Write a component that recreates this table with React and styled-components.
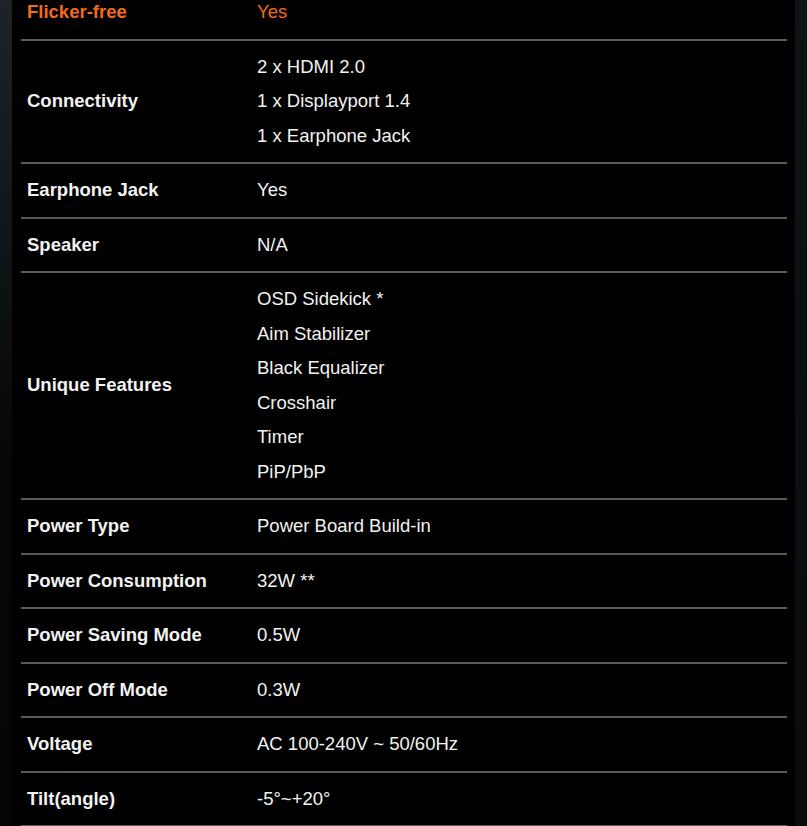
import React from 'react';
import styled, { createGlobalStyle } from 'styled-components';

const GlobalStyle = createGlobalStyle`
  html, body {
    margin: 0;
    padding: 0;
    background: #000;
    overflow: hidden;
  }
  body {
    font-family: 'Liberation Sans', Arial, sans-serif;
  }
`;

const specs = [
  { label: 'Flicker-free', values: ['Yes'], highlight: true },
  { label: 'Connectivity', values: ['2 x HDMI 2.0', '1 x Displayport 1.4', '1 x Earphone Jack'] },
  { label: 'Earphone Jack', values: ['Yes'] },
  { label: 'Speaker', values: ['N/A'] },
  {
    label: 'Unique Features',
    values: ['OSD Sidekick *', 'Aim Stabilizer', 'Black Equalizer', 'Crosshair', 'Timer', 'PiP/PbP']
  },
  { label: 'Power Type', values: ['Power Board Build-in'] },
  { label: 'Power Consumption', values: ['32W **'] },
  { label: 'Power Saving Mode', values: ['0.5W'] },
  { label: 'Power Off Mode', values: ['0.3W'] },
  { label: 'Voltage', values: ['AC 100-240V ~ 50/60Hz'] },
  { label: 'Tilt(angle)', values: ['-5°~+20°'] }
];

const Page = styled.div`
  display: flex;
  height: 826px;
  overflow: hidden;
`;

const SideStrip = styled.div`
  flex: 0 0 12px;
  background: ${(props) =>
    props.side === 'left'
      ? 'linear-gradient(180deg, #1d2427 0%, #101416 30%, #060707 55%, #050505 100%)'
      : 'linear-gradient(180deg, #0d1416 0%, #0b1012 40%, #0a0b0c 100%)'};
`;

const Main = styled.div`
  flex: 1;
  background: #000;
  padding: 0 8px 0 9px;
`;

const Table = styled.div`
  margin-top: -14px;
  display: flex;
  flex-direction: column;
`;

const Row = styled.div`
  display: grid;
  grid-template-columns: 230px 1fr;
  align-items: center;
  padding: 9px 0;
  border-bottom: 2px solid #5a5a5a;
  color: ${(props) => (props.highlight ? '#f26b1d' : '#f2f2f2')};
  font-size: 18.5px;
  line-height: 34.5px;
`;

const Label = styled.div`
  padding: 0 6px;
  font-weight: 700;
`;

const Values = styled.div`
  padding: 0 6px;
  display: flex;
  flex-direction: column;
`;

export default function App() {
  return (
    <>
      <GlobalStyle />
      <Page>
        <SideStrip side="left" />
        <Main>
          <Table>
            {specs.map((spec) => (
              <Row key={spec.label} highlight={spec.highlight}>
                <Label>{spec.label}</Label>
                <Values>
                  {spec.values.map((v) => (
                    <span key={v}>{v}</span>
                  ))}
                </Values>
              </Row>
            ))}
          </Table>
        </Main>
        <SideStrip side="right" />
      </Page>
    </>
  );
}
